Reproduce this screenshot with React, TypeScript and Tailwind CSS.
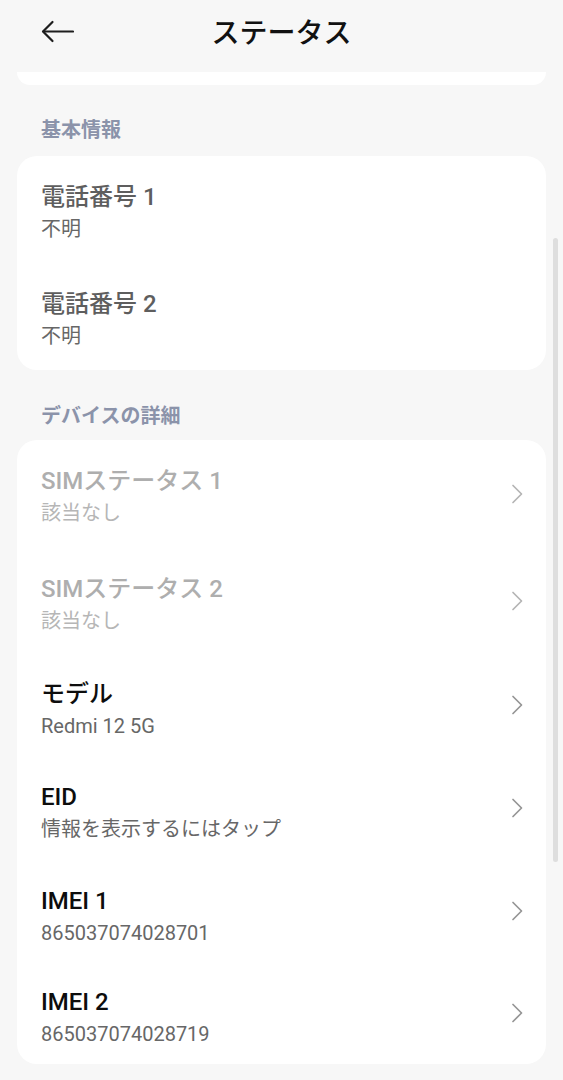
import React from "react";

type Row = {
  title: string;
  sub: string;
  kind: "plain" | "disabled" | "active";
  chevron?: boolean;
  h: string;
};

const basic: Row[] = [
  { title: "電話番号 1", sub: "不明", kind: "plain", h: "h-[107px]" },
  { title: "電話番号 2", sub: "不明", kind: "plain", h: "h-[107px]" },
];

const device: Row[] = [
  { title: "SIMステータス 1", sub: "該当なし", kind: "disabled", chevron: true, h: "h-[108px]" },
  { title: "SIMステータス 2", sub: "該当なし", kind: "disabled", chevron: true, h: "h-[105px]" },
  { title: "モデル", sub: "Redmi 12 5G", kind: "active", chevron: true, h: "h-[103px]" },
  { title: "EID", sub: "情報を表示するにはタップ", kind: "active", chevron: true, h: "h-[104px]" },
  { title: "IMEI 1", sub: "865037074028701", kind: "active", chevron: true, h: "h-[101px]" },
  { title: "IMEI 2", sub: "865037074028719", kind: "active", chevron: true, h: "h-[103px]" },
];

function Chevron({ light }: { light: boolean }) {
  return (
    <svg width="12" height="20" viewBox="0 0 12 20" fill="none" className="shrink-0">
      <path
        d="M2 1.5L10.5 10L2 18.5"
        stroke={light ? "#b4b4b4" : "#959595"}
        strokeWidth="1.7"
        strokeLinecap="round"
        strokeLinejoin="round"
      />
    </svg>
  );
}

function ListRow({ row }: { row: Row }) {
  const titleColor =
    row.kind === "disabled"
      ? "text-[#aeaeae]"
      : row.kind === "plain"
      ? "text-[#5e5e5e]"
      : "text-[#0d0d0d]";
  const subColor = row.kind === "disabled" ? "text-[#b6b6b6]" : "text-[#676767]";
  return (
    <div className={`flex items-center pl-[24px] pr-[23px] ${row.h}`}>
      <div className="flex-1 self-start pt-[26px]">
        <div className={`text-[24px] leading-[30px] font-medium ${titleColor}`}>{row.title}</div>
        <div className={`mt-[3px] text-[20px] leading-[28px] ${subColor}`}>{row.sub}</div>
      </div>
      {row.chevron && <Chevron light={row.kind === "disabled"} />}
    </div>
  );
}

function Label({ text, top, bottom }: { text: string; top: string; bottom: string }) {
  return (
    <div className={`${top} ${bottom} pl-[41px] text-[20px] leading-[28px] font-bold text-[#8b93aa]`}>{text}</div>
  );
}

export default function App() {
  return (
    <div
      className="relative w-[563px] h-[1080px] overflow-hidden bg-[#f7f7f7]"
      style={{ fontFamily: 'Roboto, "Noto Sans CJK JP", sans-serif' }}
    >
      <div className="relative flex h-[66px] items-center justify-center">
        <svg
          width="33"
          height="24"
          viewBox="0 0 33 24"
          fill="none"
          className="absolute left-[41px] top-[20px]"
        >
          <path d="M32 11.5H2.5" stroke="#1e1e1e" strokeWidth="2.2" strokeLinecap="round" />
          <path d="M11.5 2L2 11.5L11.5 21" stroke="#1e1e1e" strokeWidth="2.2" strokeLinecap="round" strokeLinejoin="round" />
        </svg>
        <div className="mt-[2px] text-[28px] leading-[36px] font-medium text-[#111]">ステータス</div>
      </div>
      <div className="mx-[17px] mt-[6px] h-[13px] rounded-b-[18px] bg-white" />
      <Label text="基本情報" top="pt-[31px]" bottom="pb-[12px]" />
      <div className="mx-[17px] rounded-[20px] bg-white">
        {basic.map((r) => (
          <ListRow key={r.title} row={r} />
        ))}
      </div>
      <Label text="デバイスの詳細" top="pt-[32px]" bottom="pb-[10px]" />
      <div className="mx-[17px] rounded-[20px] bg-white">
        {device.map((r) => (
          <ListRow key={r.title} row={r} />
        ))}
      </div>
      <div className="absolute right-[5px] top-[238px] h-[624px] w-[5px] rounded-full bg-[#dedede]" />
    </div>
  );
}
